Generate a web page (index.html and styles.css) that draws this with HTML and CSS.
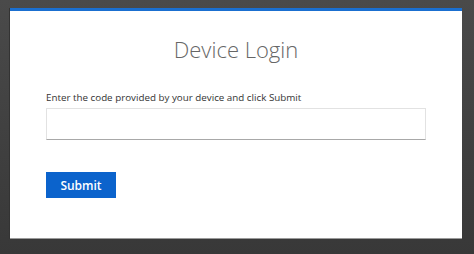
FILE: index.html
```html
<!DOCTYPE html>
<html>
<head>
<meta charset="utf-8">
<link rel="stylesheet" href="styles.css">
</head>
<body>
<div class="page">
  <div class="card">
    <h1 class="title">Device Login</h1>
    <form class="form">
      <label class="label" for="code">Enter the code provided by your device and click Submit</label>
      <input class="input" id="code" type="text">
      <button class="button" type="button">Submit</button>
    </form>
  </div>
</div>
</body>
</html>
```
FILE: styles.css
```css
html, body {
  margin: 0;
  padding: 0;
  width: 474px;
  height: 254px;
  overflow: hidden;
}
body {
  background: linear-gradient(#4a4a4a, #383838);
  font-family: "Open Sans", "DejaVu Sans", sans-serif;
}
.page {
  padding: 8px 12px 0 10px;
}
.card {
  width: 452px;
  height: 231px;
  box-sizing: border-box;
  background: #fff;
  border-top: 3px solid #1a6fd0;
  border-bottom: 1px solid #9a9a9a;
  padding: 0 36px;
  box-shadow: -1px 0 0 #333;
}
.title {
  margin: 23px 0 0;
  text-align: center;
  font-weight: 300;
  font-size: 22px;
  line-height: 30px;
  color: #666;
}
.form {
  display: flex;
  flex-direction: column;
  align-items: flex-start;
  margin-top: 27px;
}
.label {
  font-size: 9.8px;
  line-height: 14px;
  color: #333;
}
.input {
  margin-top: 3px;
  width: 380px;
  height: 32px;
  box-sizing: border-box;
  border: 1px solid #e2e2e2;
  border-bottom: 1px solid #a8a8a8;
  outline: none;
}
.button {
  margin-top: 32px;
  width: 70px;
  height: 26px;
  border: none;
  background: #0b63cc;
  color: #fff;
  font-family: "Open Sans", sans-serif;
  font-weight: 600;
  font-size: 12px;
  padding: 0;
}
```
